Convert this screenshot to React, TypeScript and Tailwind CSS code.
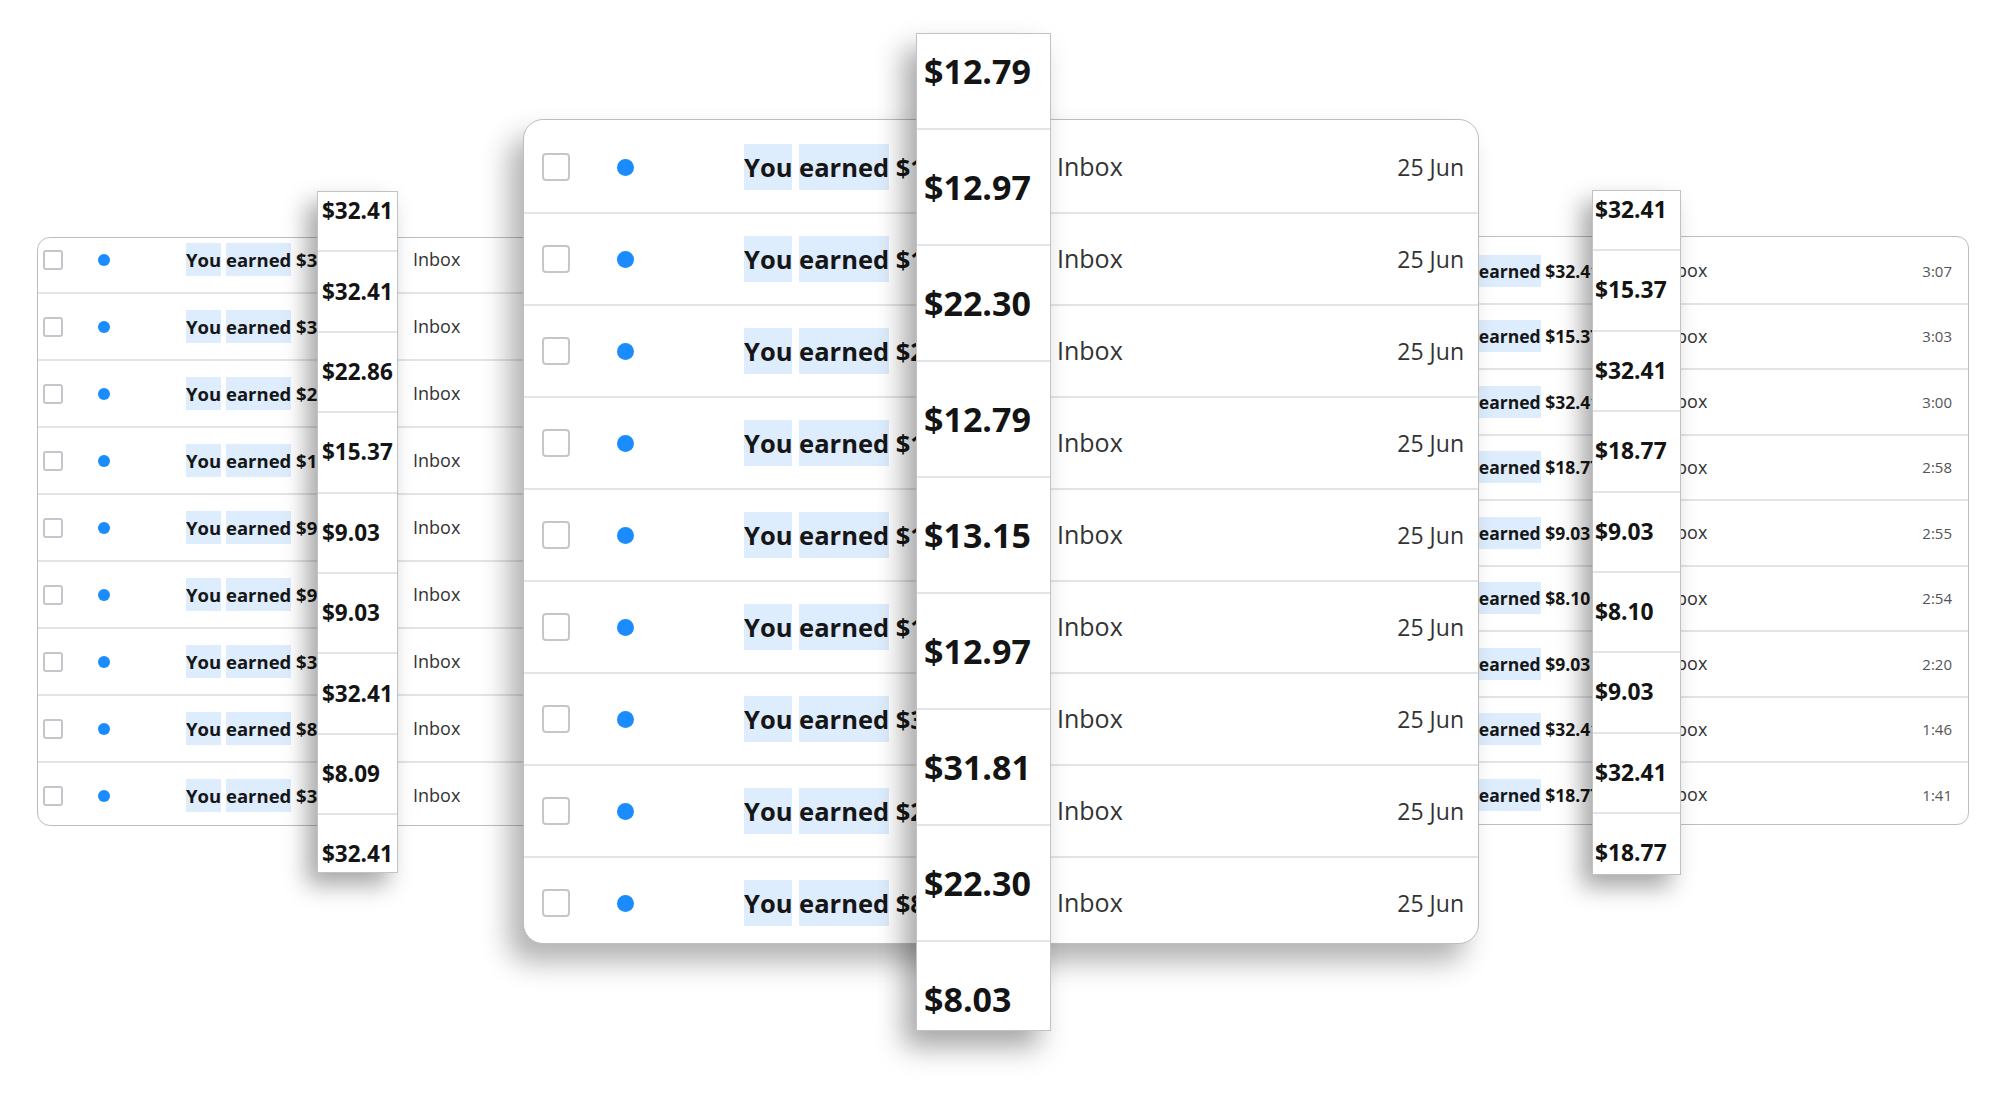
type Variant = {
  list: string;
  row: string;
  check: string;
  dot: string;
  subject: string;
  mark: string;
  labelWrap: string;
  label: string;
  date: string;
};

const big: Variant = {
  list: "pt-[2px]",
  row: "h-[92px] border-b-2 border-[#e2e4ea]",
  check: "ml-[18px] w-[28px] h-[28px] rounded-[4px] border-2",
  dot: "ml-[47px] w-[17px] h-[17px]",
  subject: "ml-[110px] w-[172px] text-[25.5px]",
  mark: "leading-[46px]",
  labelWrap: "ml-[141px]",
  label: "text-[25px]",
  date: "mr-[14px] text-[23px] text-[#333]",
};

const side: Variant = {
  list: "-mt-[11px]",
  row: "h-[67px] border-b-2 border-[#e2e4ea]",
  check: "ml-[5px] w-[20px] h-[20px] rounded-[3px] border-2",
  dot: "ml-[35px] w-[12px] h-[12px]",
  subject: "ml-[76px] w-[131px] text-[18.5px]",
  mark: "leading-[33px]",
  labelWrap: "ml-[96px]",
  label: "text-[18px]",
  date: "mr-[15px] text-[17px] text-[#333]",
};

const sideRight: Variant = {
  list: "pt-[2px]",
  row: "h-[65.5px] border-b-2 border-[#e2e4ea]",
  check: "ml-[5px] w-[20px] h-[20px] rounded-[3px] border-2",
  dot: "ml-[35px] w-[12px] h-[12px]",
  subject: "ml-[76px] w-[151px] text-[17.5px]",
  mark: "leading-[32px]",
  labelWrap: "ml-[89px] w-[60px] overflow-hidden",
  label: "text-[18px] -ml-[21px]",
  date: "mr-[16px] text-[15px] text-[#555]",
};

const centerPrices = ["$12.79", "$12.97", "$22.30", "$12.79", "$13.15", "$12.97", "$31.81", "$22.30", "$8.03"];
const leftPrices = ["$32.41", "$32.41", "$22.86", "$15.37", "$9.03", "$9.03", "$32.41", "$8.09", "$32.41"];
const rightPrices = ["$32.41", "$15.37", "$32.41", "$18.77", "$9.03", "$8.10", "$9.03", "$32.41", "$18.77"];
const rightTimes = ["3:07", "3:03", "3:00", "2:58", "2:55", "2:54", "2:20", "1:46", "1:41"];

const MailRow = ({ v, price, date }: { v: Variant; price: string; date: string }) => (
  <div className={`flex items-center shrink-0 ${v.row}`}>
    <span className={`shrink-0 border-[#c4c6cb] bg-white ${v.check}`} />
    <span className={`shrink-0 rounded-full bg-[#1a8cff] ${v.dot}`} />
    <div className={`shrink-0 overflow-hidden whitespace-nowrap font-bold text-[#161616] ${v.subject}`}>
      <span className={`inline-block bg-[#ddedfd] ${v.mark}`}>You</span>{" "}
      <span className={`inline-block bg-[#ddedfd] ${v.mark}`}>earned</span>
      {` ${price}`}
    </div>
    <div className={`shrink-0 whitespace-nowrap ${v.labelWrap}`}>
      <span className={`text-[#333] ${v.label}`}>Inbox</span>
    </div>
    <span className={`ml-auto whitespace-nowrap ${v.date}`}>{date}</span>
  </div>
);

const PriceStrip = ({ prices, className, cell }: { prices: string[]; className: string; cell: string }) => (
  <div className={`absolute bg-white border border-[#c2c2c2] overflow-hidden ${className}`}>
    <div className="-mt-[20px] flex flex-col">
      {prices.map((p, i) => (
        <div key={i} className={`flex items-center shrink-0 border-b-2 border-[#e2e4ea] font-bold text-[#141414] ${cell}`}>
          {p}
        </div>
      ))}
    </div>
  </div>
);

export default function App() {
  return (
    <div className="relative w-[2000px] h-[1094px] overflow-hidden bg-white font-['Open_Sans',sans-serif]">
      {/* left list */}
      <div className="absolute left-[37px] top-[237px] w-[661px] h-[589px] rounded-[13px] border border-[#bdbdbd] bg-white overflow-hidden z-10">
        <div className={`flex flex-col ${side.list}`}>
          {leftPrices.map((p, i) => (
            <MailRow key={i} v={side} price={p} date="25 Jun" />
          ))}
        </div>
      </div>
      <PriceStrip
        prices={leftPrices}
        className="left-[317px] top-[191px] w-[81px] h-[682px] z-20 shadow-[-10px_12px_22px_rgba(0,0,0,0.35)]"
        cell="h-[80.4px] pl-[4px] text-[22.5px]"
      />

      {/* right list */}
      <div className="absolute left-[1292px] top-[236px] w-[677px] h-[589px] rounded-[12px] border border-[#bdbdbd] bg-white overflow-hidden z-10">
        <div className={`flex flex-col ${sideRight.list}`}>
          {rightPrices.map((p, i) => (
            <MailRow key={i} v={sideRight} price={p} date={rightTimes[i]} />
          ))}
        </div>
      </div>
      <PriceStrip
        prices={rightPrices}
        className="left-[1592px] top-[190px] w-[89px] h-[685px] z-20 shadow-[-10px_12px_22px_rgba(0,0,0,0.35)]"
        cell="h-[80.4px] pl-[2px] text-[22.8px]"
      />

      {/* center list */}
      <div className="absolute left-[523px] top-[119px] w-[956px] h-[825px] rounded-[20px] border border-[#bdbdbd] bg-white overflow-hidden z-30 shadow-[-14px_18px_28px_rgba(0,0,0,0.3)]">
        <div className={`flex flex-col ${big.list}`}>
          {centerPrices.map((p, i) => (
            <MailRow key={i} v={big} price={p} date="25 Jun" />
          ))}
        </div>
      </div>
      <PriceStrip
        prices={centerPrices}
        className="left-[916px] top-[33px] w-[135px] h-[998px] z-40 shadow-[-12px_16px_26px_rgba(0,0,0,0.35)]"
        cell="h-[116px] pl-[7px] text-[34px]"
      />
    </div>
  );
}
